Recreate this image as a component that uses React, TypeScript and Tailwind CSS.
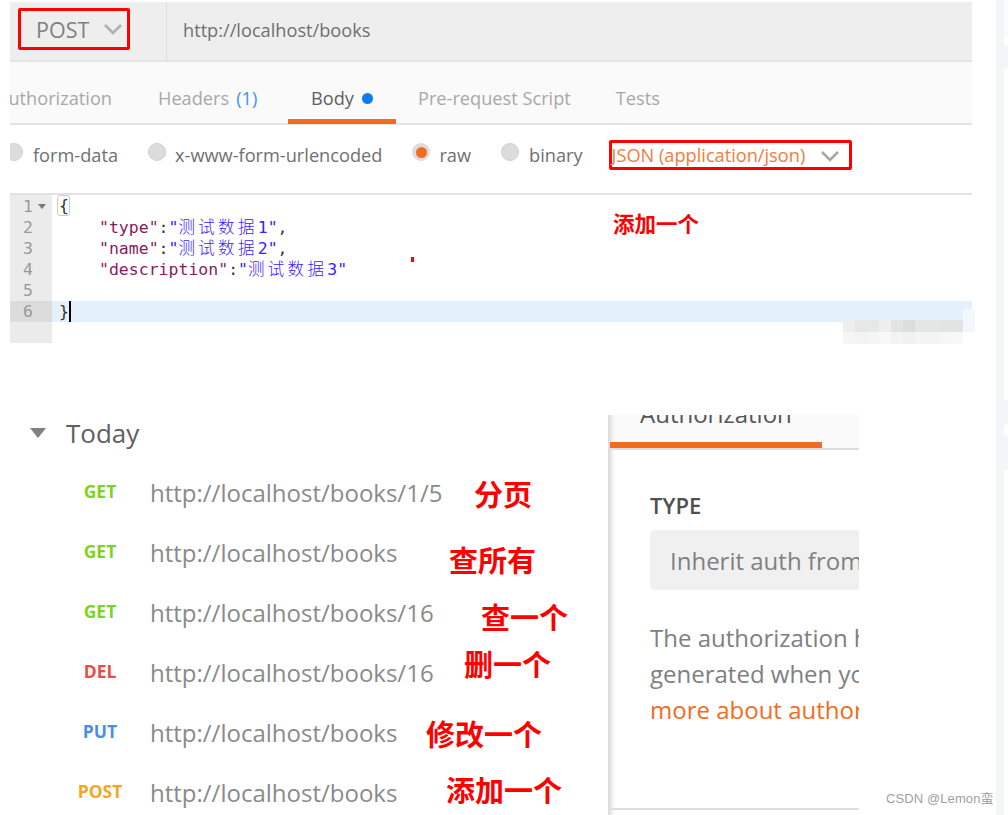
import React from 'react';

const sans = 'font-["Open_Sans","Noto_Sans_CJK_SC",sans-serif]';

const Chevron = ({ className }: { className: string }) => (
  <svg viewBox="0 0 18 11" className={className} fill="none" stroke="currentColor" strokeWidth="2.6">
    <path d="M1 1l8 8 8-8" />
  </svg>
);

const Radio = ({ active }: { active?: boolean }) =>
  active ? (
    <span className="mb-[5px] w-[18px] h-[18px] rounded-full bg-[#dcdcdc] flex items-center justify-center">
      <span className="w-[11px] h-[11px] rounded-full bg-[#f26b21]" />
    </span>
  ) : (
    <span className="mb-[5px] w-[18px] h-[18px] rounded-full bg-[#dcdcdc] border border-[#d0d0d0]" />
  );

const Str = ({ children, n }: { children: string; n: number }) => (
  <span className="text-[#3a22ff]">
    "<span className='font-["Noto_Sans_CJK_SC"] tracking-[3.3px] font-light'>{children}</span>
    {n}"
  </span>
);

const history = [
  { m: 'GET', c: 'text-[#7ed321]', url: 'http://localhost/books/1/5' },
  { m: 'GET', c: 'text-[#7ed321]', url: 'http://localhost/books' },
  { m: 'GET', c: 'text-[#7ed321]', url: 'http://localhost/books/16' },
  { m: 'DEL', c: 'text-[#ed4b48]', url: 'http://localhost/books/16' },
  { m: 'PUT', c: 'text-[#4a90e2]', url: 'http://localhost/books' },
  { m: 'POST', c: 'text-[#f5a623]', url: 'http://localhost/books' },
];

const notes = [
  { t: '分页', cls: 'left-[474px] top-[475px]' },
  { t: '查所有', cls: 'left-[449px] top-[541px]' },
  { t: '查一个', cls: 'left-[481px] top-[598px]' },
  { t: '删一个', cls: 'left-[464px] top-[645px]' },
  { t: '修改一个', cls: 'left-[426px] top-[715px]' },
  { t: '添加一个', cls: 'left-[446px] top-[771px]' },
];

const blurTop = ['#eeeeee', '#e6e7e7', '#e6e7e7', '#eeeeee', '#e2e3e3', '#dcdddd', '#e4e5e5', '#e4e5e5', '#e2e3e3', '#e2e3e3'];
const blurBottom = ['#f6f6f6', '#f3f3f3', '#f5f5f5', '#f8f8f8', '#f3f3f3', '#f1f1f1', '#f4f4f4', '#f4f4f4', '#f6f6f6', '#f8f8f8'];

export default function App() {
  return (
    <div className={`relative w-[1008px] h-[815px] overflow-hidden bg-white ${sans}`}>
      <div className="absolute right-[4px] top-0 bottom-0 w-2 bg-[#f4f5f7]" />
      <div className="absolute right-0 top-0 w-1 h-[37px] bg-[#fbfbfb]" />
      <div className="absolute right-0 top-[45px] w-1 h-[24px] bg-[#f5f5fa]" />
      <div className="absolute right-0 top-[400px] w-1 h-[25px] bg-[#f5f5fa]" />
      <div className="absolute right-0 top-[435px] w-1 h-[35px] bg-[#f5f5fa]" />

      {/* request builder */}
      <div className="ml-[10px] mt-[2px] w-[962px] flex flex-col">
        <div className="h-[58px] bg-[#eeeeee] flex items-stretch">
          <div className="w-[157px] border-r border-[#dddddd] pl-[8px] pt-[6px]">
            <div className="w-[112px] h-[42px] border-[3px] border-[#ff0000] rounded-[2px] flex items-center pl-[15px] text-[21.5px] text-[#808080]">
              <span className="pt-[3px]">POST</span>
              <Chevron className="w-[18px] h-[11px] ml-[15px] text-[#b0b0b0]" />
            </div>
          </div>
          <div className="pl-4 flex items-center text-[18.2px] text-[#707070]">http://localhost/books</div>
        </div>
        <div className="h-[65px] bg-[#fafafa] border-y-2 border-[#e4e4e4] flex items-stretch text-[18.2px] text-[#a8a8a8]">
          <div className="w-[102px] shrink-0 overflow-hidden flex items-center justify-end pt-[12px]">uthorization</div>
          <div className="ml-[46px] w-[130px] shrink-0 flex items-center pt-[12px]">
            Headers<span className="text-[#3f93ee] ml-[7px]">(1)</span>
          </div>
          <div className="relative w-[108px] shrink-0 flex items-center justify-center gap-2 pt-[12px] text-[#606060]">
            Body
            <span className="w-[11px] h-[11px] rounded-full bg-[#0f7bf0]" />
            <span className="absolute left-0 right-0 -bottom-[1px] h-[5px] bg-[#f26b21]" />
          </div>
          <div className="ml-[22px] flex items-center pt-[12px]">Pre-request Script</div>
          <div className="ml-[45px] flex items-center pt-[12px]">Tests</div>
        </div>
        <div className="h-[70px] border-b-2 border-[#e2e2e2] flex items-center pb-[8px] text-[18.2px] text-[#707070] overflow-hidden">
          <div className="-ml-[5px] flex items-center gap-[10px]">
            <Radio />
            <span className="pt-[1px]">form-data</span>
          </div>
          <div className="ml-[30px] flex items-center gap-[9px]">
            <Radio />
            <span className="pt-[1px]">x-www-form-urlencoded</span>
          </div>
          <div className="ml-[30px] flex items-center gap-[9px]">
            <Radio active />
            <span className="pt-[1px]">raw</span>
          </div>
          <div className="ml-[30px] flex items-center gap-[10px]">
            <Radio />
            <span className="pt-[1px]">binary</span>
          </div>
          <div className="ml-[26px] w-[243px] h-[30px] shrink-0 border-[3px] border-[#ff0000] rounded-[2px] flex items-center justify-between pr-[10px] pt-[2px] text-[#f47b3b] whitespace-nowrap">
            JSON (application/json)
            <Chevron className="w-[18px] h-[11px] text-[#a8a8a8]" />
          </div>
        </div>
        <div className='h-[148px] flex font-["DejaVu_Sans_Mono","Noto_Sans_CJK_SC",monospace] text-[16.5px] leading-[21px]'>
          <div className="w-[42px] bg-[#ebebeb] text-[#999999] pt-[1px]">
            {[1, 2, 3, 4, 5, 6].map((n) => (
              <div key={n} className={`relative pl-[13px] h-[21px] ${n === 6 ? 'bg-[#dcdcdc]' : ''}`}>
                {n}
                {n === 1 && (
                  <svg viewBox="0 0 8 5" className="absolute left-[28px] top-[8px] w-2 h-[5px] text-[#777777]" fill="currentColor">
                    <path d="M0 0h8L4 5z" />
                  </svg>
                )}
              </div>
            ))}
          </div>
          <div className="flex-1 text-[#333333]">
            <div className="h-[21px] pl-[5px]">
              <span className="border border-[#cccccc] rounded-[3px] pl-[1px]">{'{'}</span>
            </div>
            <div className="h-[21px] pl-[47px] whitespace-pre">
              <span className="text-[#8a1a5e]">"type"</span>:<Str n={1}>测试数据</Str>,
            </div>
            <div className="h-[21px] pl-[47px] whitespace-pre">
              <span className="text-[#8a1a5e]">"name"</span>:<Str n={2}>测试数据</Str>,
            </div>
            <div className="h-[21px] pl-[47px] whitespace-pre">
              <span className="text-[#8a1a5e]">"description"</span>:<Str n={3}>测试数据</Str>
            </div>
            <div className="h-[22px]" />
            <div className="h-[21px] pl-[7px] bg-[#e5f0fd] flex">
              {'}'}
              <span className="w-[2px] h-[21px] bg-black" />
            </div>
          </div>
        </div>
      </div>

      {/* history + auth panels */}
      <div className="absolute left-0 top-[415px] right-0 flex">
        <div className="w-[608px] shrink-0">
          <div className="flex items-center h-[36px] pl-[30px]">
            <svg viewBox="0 0 16 10" className="w-4 h-[10px] text-[#808080]" fill="currentColor">
              <path d="M0 0h16L8 10z" />
            </svg>
            <span className="ml-5 text-[26px] text-[#606060]">Today</span>
          </div>
          <div className="mt-[20px] flex flex-col">
            {history.map((h, i) => (
              <div key={i} className="h-[60px] flex items-start">
                <span className={`w-[70px] ml-[65px] text-center text-[17.5px] font-bold leading-[22px] mt-[9px] ${h.c}`}>{h.m}</span>
                <span className="ml-[15px] text-[24px] leading-[32px] mt-[6px] text-[#8a8a8a]">{h.url}</span>
              </div>
            ))}
          </div>
        </div>
        <div className="relative w-[251px] shrink-0 h-[400px] border-l-2 border-[#dddddd] overflow-hidden flex flex-col">
          <div className="h-[35px] bg-[#fafafa] border-b-2 border-[#dddddd] relative overflow-hidden">
            <span className="absolute left-[30px] -top-[19px] text-[24px] text-[#555555]">Authorization</span>
            <span className="absolute z-10 left-0 w-[212px] bottom-0 h-[6px] bg-[#f26b21]" />
          </div>
          <div className="pl-[40px] whitespace-nowrap">
            <div className="mt-[40px] text-[22px] font-semibold leading-[30px] text-[#505050]">TYPE</div>
            <div className="mt-[10px] h-[60px] bg-[#f0f0f0] rounded-l-[5px] pl-5 pt-[2px] flex items-center text-[24px] text-[#808080]">
              Inherit auth from parent
            </div>
            <div className="mt-[30px] text-[24px] leading-[36px] text-[#808080]">
              <p>The authorization header will be</p>
              <p>generated when you send the request</p>
              <p className="text-[#f26b21]">more about authorization</p>
            </div>
          </div>
          <div className="mt-auto mb-[5px] border-b-2 border-[#dddddd]" />
          <div className="absolute left-0 top-0 bottom-0 w-[5px] bg-gradient-to-r from-[#e4e4e4] to-transparent" />
        </div>
      </div>

      {/* hand-added annotations */}
      <span className='absolute left-[613px] top-[209px] font-["Noto_Sans_CJK_SC"] text-[21.5px] font-bold leading-[28px] text-[#ff0000]'>添加一个</span>
      {notes.map((n) => (
        <span key={n.t} className={`absolute ${n.cls} font-["Noto_Sans_CJK_SC"] text-[29px] font-bold leading-[36px] text-[#ff0000] whitespace-nowrap`}>
          {n.t}
        </span>
      ))}
      <span className="absolute left-[411px] top-[257px] w-[3px] h-[5px] bg-[#ff0000]" />

      {/* mosaic over the editor corner */}
      <div className="absolute left-[963px] top-[309px] w-3 h-[23px] bg-[#f2f7fe]" />
      <div className="absolute left-[843px] top-[320px] grid grid-cols-10 w-[120px] h-[24px]">
        {[...blurTop, ...blurBottom].map((c, i) => (
          <span key={i} style={{ backgroundColor: c }} />
        ))}
      </div>

      <span className='absolute left-[886px] top-[790px] font-["Liberation_Sans","Noto_Sans_CJK_SC",sans-serif] text-[13px] leading-[18px] tracking-[0.1px] text-[#a0a0a0]'>CSDN @Lemon蛮</span>
    </div>
  );
}
